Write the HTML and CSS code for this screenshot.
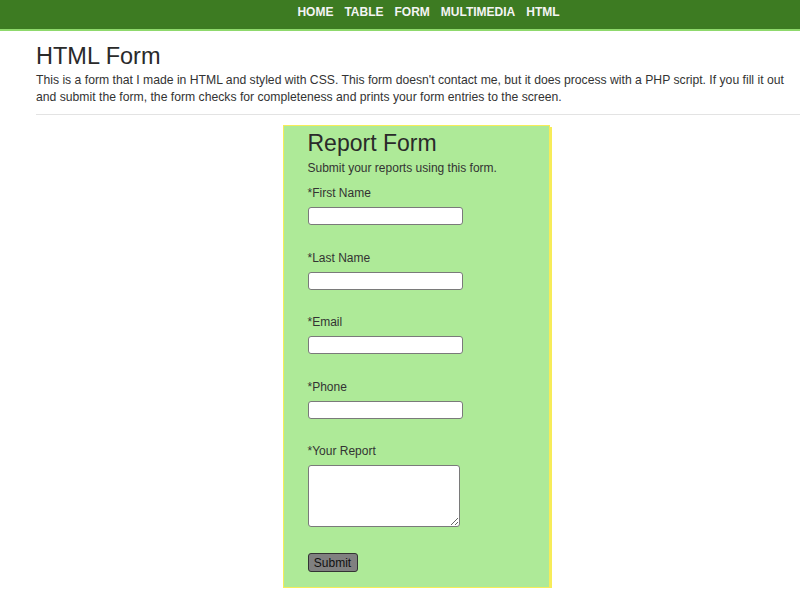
FILE: index.html
```html
<!DOCTYPE html>
<html>
<head>
<meta charset="utf-8">
<title>HTML Form</title>
<link rel="stylesheet" href="styles.css">
</head>
<body>
<nav class="topnav">
  <a href="#">HOME</a>
  <a href="#">TABLE</a>
  <a href="#">FORM</a>
  <a href="#">MULTIMEDIA</a>
  <a href="#">HTML</a>
</nav>
<main class="content">
  <h1 class="page-title">HTML Form</h1>
  <p class="intro">This is a form that I made in HTML and styled with CSS. This form doesn't contact me, but it does process with a PHP script. If you fill it out and submit the form, the form checks for completeness and prints your form entries to the screen.</p>
  <hr class="divider">
  <div class="form-wrap">
    <form class="report-form">
      <h2 class="form-title">Report Form</h2>
      <p class="form-sub">Submit your reports using this form.</p>
      <div class="field">
        <label>*First Name</label>
        <input type="text" class="text-input">
      </div>
      <div class="field">
        <label>*Last Name</label>
        <input type="text" class="text-input">
      </div>
      <div class="field">
        <label>*Email</label>
        <input type="text" class="text-input">
      </div>
      <div class="field">
        <label>*Phone</label>
        <input type="text" class="text-input">
      </div>
      <div class="field">
        <label>*Your Report</label>
        <textarea class="text-area"></textarea>
      </div>
      <button type="button" class="submit-btn">Submit</button>
    </form>
  </div>
</main>
</body>
</html>
```
FILE: styles.css
```css
html, body {
  margin: 0;
  padding: 0;
  background: #ffffff;
  font-family: "Liberation Sans", Arial, sans-serif;
  color: #333333;
}

.topnav {
  height: 29px;
  background: #3d7b22;
  border-bottom: 2px solid #8fd96c;
  display: flex;
  justify-content: center;
  align-items: center;
  gap: 11px;
  padding-left: 57px;
  box-sizing: content-box;
}

.topnav a {
  color: #f4f4f4;
  text-decoration: none;
  font-weight: bold;
  font-size: 12px;
  line-height: 14px;
  margin-top: -5px;
}

.content {
  padding: 0 0 0 36px;
}

.page-title {
  font-size: 23.5px;
  font-weight: normal;
  margin: 11px 0 0;
  line-height: 28px;
  color: #2a2a2a;
}

.intro {
  font-size: 12.2px;
  line-height: 17px;
  margin: 2px 0 0;
}

.divider {
  border: 0;
  border-top: 1px solid #e3e3e3;
  margin: 8px 0 10px;
}

.form-wrap {
  display: flex;
  justify-content: center;
  padding-right: 4px;
}

.report-form {
  width: 217px;
  background: #aeea98;
  border: 1px solid #f7ec59;
  box-shadow: 2px 2px 0 #f7ec59;
  padding: 3px 24px 15px;
}

.form-title {
  font-size: 23px;
  font-weight: normal;
  line-height: 28px;
  margin: 0;
  color: #2a2a2a;
}

.form-sub {
  font-size: 12px;
  margin: 4px 0 0;
  line-height: 14px;
}

.field {
  margin-top: 11px;
}

.field + .field {
  margin-top: 25.5px;
}

.field label {
  display: block;
  font-size: 12px;
  line-height: 14px;
  margin-bottom: 7px;
}

.text-input {
  display: block;
  box-sizing: border-box;
  width: 155px;
  height: 18px;
  border: 1px solid #7a7a7a;
  border-radius: 3px;
  background: #ffffff;
  padding: 0 3px;
  margin: 0;
}

.text-area {
  display: block;
  box-sizing: border-box;
  width: 152px;
  height: 62px;
  border: 1px solid #7a7a7a;
  border-radius: 3px;
  background: #ffffff;
  margin: 0;
  resize: both;
}

.submit-btn {
  display: block;
  margin-top: 26px;
  width: 50px;
  height: 19px;
  padding: 0;
  font-family: "Liberation Sans", Arial, sans-serif;
  font-size: 12px;
  color: #111111;
  background: #808080;
  border: 1px solid #333333;
  border-radius: 3px;
}
```
